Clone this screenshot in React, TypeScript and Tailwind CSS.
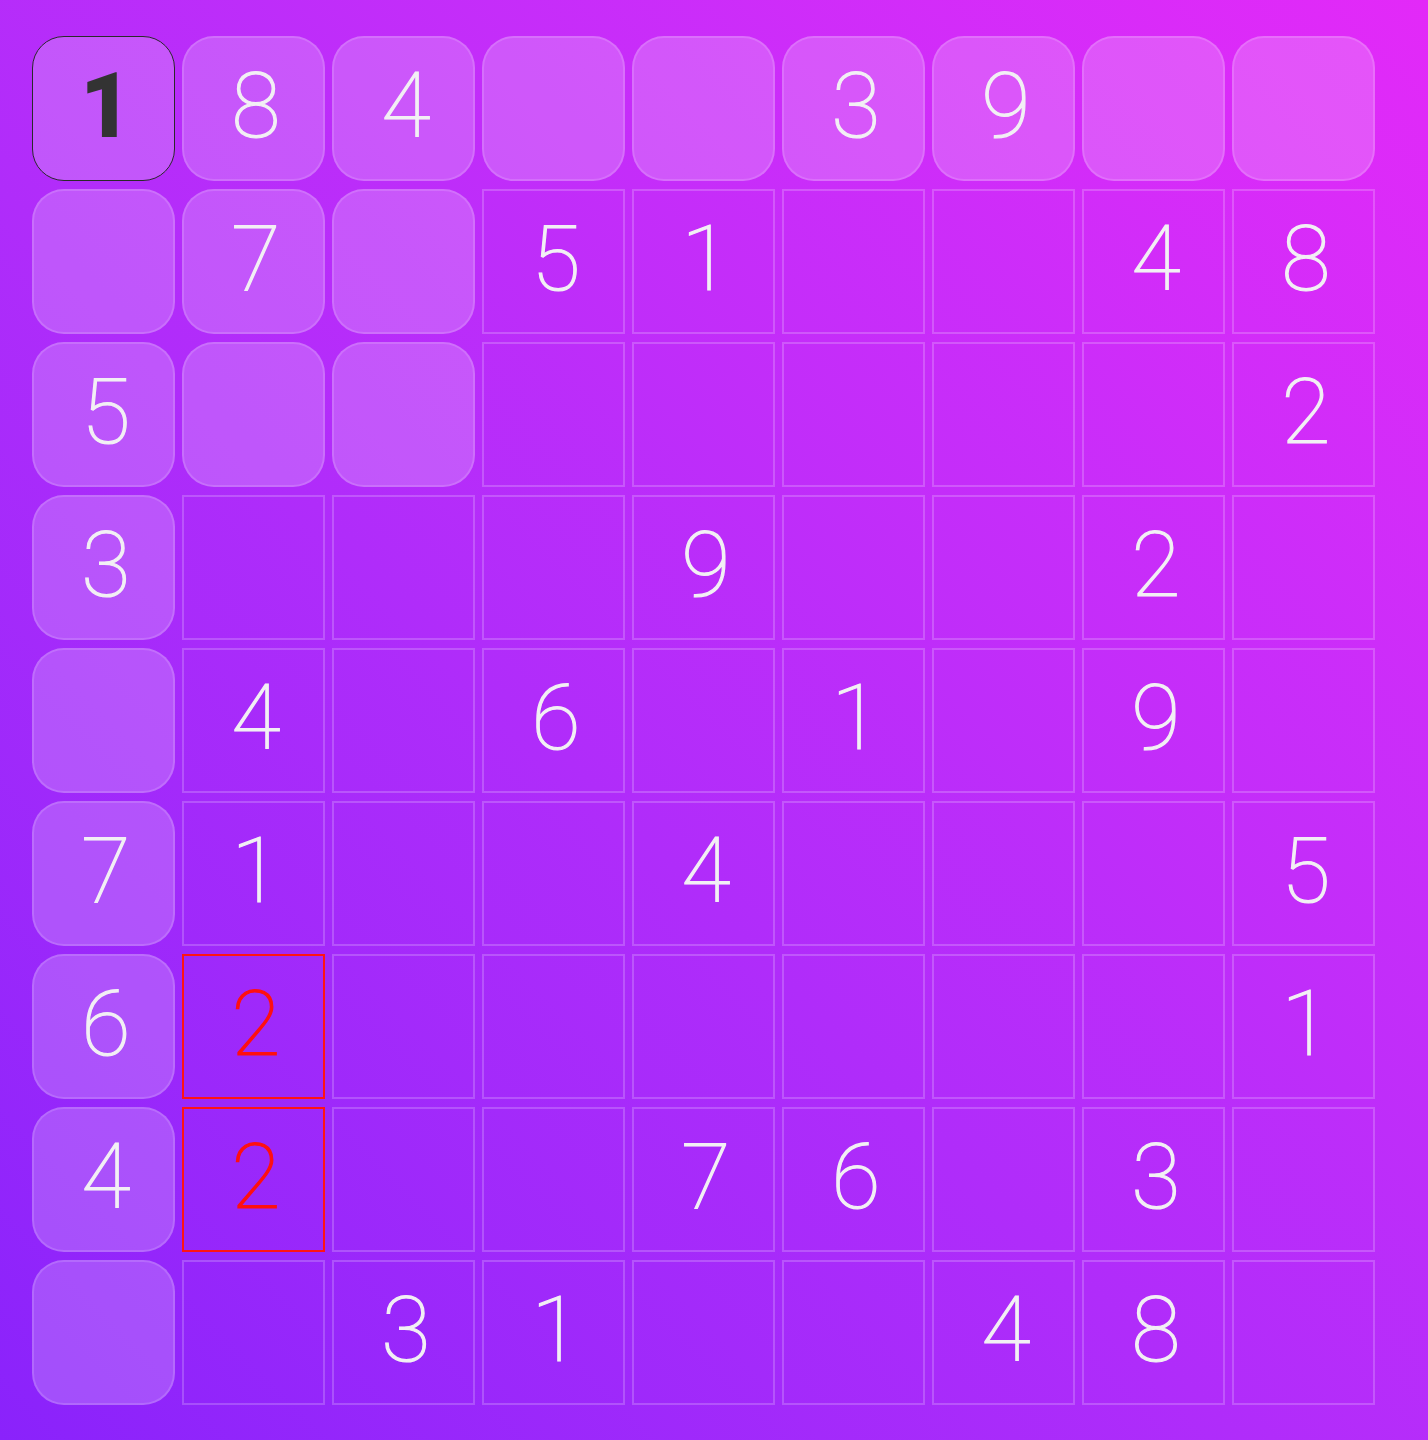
import React from 'react';

const rows: (number | null)[][] = [
  [1, 8, 4, null, null, 3, 9, null, null],
  [null, 7, null, 5, 1, null, null, 4, 8],
  [5, null, null, null, null, null, null, null, 2],
  [3, null, null, null, 9, null, null, 2, null],
  [null, 4, null, 6, null, 1, null, 9, null],
  [7, 1, null, null, 4, null, null, null, 5],
  [6, 2, null, null, null, null, null, null, 1],
  [4, 2, null, null, 7, 6, null, 3, null],
  [null, null, 3, 1, null, null, 4, 8, null],
];

// duplicates in column 1
const errors = new Set(['6-1', '7-1']);

const selected = { row: 0, col: 0 };

const App: React.FC = () => {
  const isRelated = (r: number, c: number) =>
    r === selected.row ||
    c === selected.col ||
    (Math.floor(r / 3) === Math.floor(selected.row / 3) &&
      Math.floor(c / 3) === Math.floor(selected.col / 3));

  const cellClass = (r: number, c: number) => {
    if (r === selected.row && c === selected.col) {
      return 'rounded-[32px] bg-white/20 border-[1.5px] border-[#2a2a2a] text-[#333] font-black';
    }
    if (errors.has(`${r}-${c}`)) {
      return 'border-2 border-[#ff1414] text-[#ff1010] font-thin [-webkit-text-stroke:1.2px_currentColor]';
    }
    if (isRelated(r, c)) {
      return 'rounded-[32px] bg-white/20 border-2 border-white/15 text-[#f2f0f4] font-thin [-webkit-text-stroke:1.2px_currentColor]';
    }
    return 'border-2 border-white/20 text-[#f2f0f4] font-thin [-webkit-text-stroke:1.2px_currentColor]';
  };

  return (
    <div
      className="min-h-screen w-full bg-gradient-to-tr from-[#8a22fb] to-[#e329f8] pt-[36px] pl-[32px]"
      style={{ fontFamily: 'Roboto, "Noto Sans", sans-serif' }}
    >
      <div className="grid grid-cols-[repeat(9,143px)] grid-rows-[repeat(9,145px)] gap-x-[7px] gap-y-[8px]">
        {rows.map((row, r) =>
          row.map((value, c) => (
            <div
              key={`${r}-${c}`}
              className={`flex items-center justify-center pl-[5px] pb-[3px] text-[90px] leading-none select-none ${cellClass(r, c)}`}
            >
              {value ?? ''}
            </div>
          ))
        )}
      </div>
    </div>
  );
};

export default App;
